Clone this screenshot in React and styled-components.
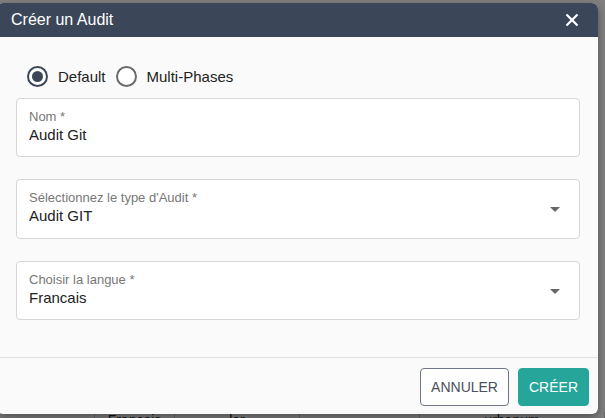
import React, { useState } from "react";
import styled, { createGlobalStyle } from "styled-components";

const Global = createGlobalStyle`
  html, body { margin: 0; padding: 0; }
  body {
    width: 605px; height: 418px; overflow: hidden;
    background: #ffffff;
    font-family: "Liberation Sans", Arial, sans-serif;
  }
`;

const Page = styled.div`
  position: relative;
  width: 605px;
  height: 418px;
  overflow: hidden;
  display: flex;
  flex-direction: column;
  justify-content: space-between;
  background: #ffffff;
`;

const TableRow = styled.div`
  display: grid;
  grid-template-columns: ${(p) => p.$cols};
  height: ${(p) => p.$h}px;
  flex: none;
  margin-top: ${(p) => p.$mt || 0}px;
  margin-bottom: ${(p) => p.$mb || 0}px;
  font-size: 14px;
  color: #222;
`;

const Cell = styled.div`
  border-right: 1px solid #cfcfcf;
  display: flex;
  align-items: center;
  justify-content: ${(p) => p.$justify || "center"};
  overflow: hidden;
  white-space: nowrap;
`;

const Caret = styled.span`
  font-size: 10px;
  color: #333;
`;

const Overlay = styled.div`
  position: absolute;
  inset: 0;
  background: rgba(0, 0, 0, 0.5);
`;

const Dialog = styled.div`
  position: absolute;
  left: -3px;
  top: 3px;
  width: 601px;
  height: 411px;
  background: #fafafa;
  border-radius: 6px;
  overflow: hidden;
  display: flex;
  flex-direction: column;
  box-shadow: 0 4px 10px rgba(0, 0, 0, 0.35);
`;

const Header = styled.div`
  height: 34px;
  flex: none;
  background: #3b4759;
  color: #ffffff;
  display: flex;
  align-items: center;
  justify-content: space-between;
  padding: 0 19px 0 14px;
`;

const Title = styled.h2`
  margin: 0;
  font-size: 16px;
  font-weight: 400;
`;

const CloseBtn = styled.button`
  border: 0;
  background: none;
  padding: 0;
  width: 14px;
  height: 14px;
  display: flex;
  cursor: pointer;
`;

const Body = styled.div`
  flex: 1;
  padding: 28px 18px 0 19px;
  display: flex;
  flex-direction: column;
`;

const RadioRow = styled.div`
  display: flex;
  align-items: center;
  gap: 10px;
  margin-left: 11px;
  height: 22px;
  margin-bottom: 11px;
`;

const RadioLabel = styled.label`
  display: flex;
  align-items: center;
  gap: 10px;
  font-size: 15px;
  color: #222;
  cursor: pointer;
`;

const RadioCircle = styled.span`
  width: 21px;
  height: 21px;
  box-sizing: border-box;
  border-radius: 50%;
  border: 2px solid ${(p) => (p.$on ? "#3b4759" : "#6a6a6a")};
  display: flex;
  align-items: center;
  justify-content: center;
  background: #fff;
  &::after {
    content: "";
    width: 11px;
    height: 11px;
    border-radius: 50%;
    background: #3b4759;
    display: ${(p) => (p.$on ? "block" : "none")};
  }
`;

const Fields = styled.div`
  display: flex;
  flex-direction: column;
  gap: 22px;
`;

const Field = styled.div`
  position: relative;
  height: ${(p) => p.$h}px;
  box-sizing: border-box;
  background: #ffffff;
  border: 1px solid #d6d6d6;
  border-radius: 4px;
  padding: 10px 12px 0 12px;
  display: flex;
  flex-direction: column;
  gap: 2px;
`;

const FieldLabel = styled.span`
  font-size: 13px;
  line-height: 15px;
  color: #777777;
`;

const FieldValue = styled.span`
  font-size: 15px;
  line-height: 18px;
  color: #222222;
`;

const Arrow = styled.span`
  position: absolute;
  right: 19px;
  top: 50%;
  margin-top: -2px;
  width: 0;
  height: 0;
  border-left: 5px solid transparent;
  border-right: 5px solid transparent;
  border-top: 5px solid #666;
`;

const Footer = styled.div`
  flex: none;
  border-top: 1px solid #e2e2e2;
  display: flex;
  justify-content: flex-end;
  gap: 9px;
  padding: 10px 9px 8px 0;
`;

const Button = styled.button`
  height: 38px;
  box-sizing: border-box;
  padding: 0 10px;
  font-family: "Liberation Sans", Arial, sans-serif;
  font-size: 14px;
  border-radius: 4px;
  cursor: pointer;
  border: 1px solid ${(p) => (p.$primary ? "#26a69a" : "#6f7787")};
  background: ${(p) => (p.$primary ? "#26a69a" : "#ffffff")};
  color: ${(p) => (p.$primary ? "#ffffff" : "#4a4f5a")};
`;

export default function App() {
  const [mode, setMode] = useState("default");
  return (
    <>
      <Global />
      <Page>
        <TableRow $cols="72px 33px 175px 12px 135px 18px 60px 35px 65px" $h={8} $mt={-8}>
          <Cell><Caret>▼</Caret></Cell>
          <Cell />
          <Cell>Egalement</Cell>
          <Cell />
          <Cell><Caret>▼</Caret></Cell>
          <Cell />
          <Cell>Egalement</Cell>
          <Cell />
          <Cell>Egalement</Cell>
        </TableRow>
        <TableRow $cols="95px 80px 125px 120px 185px" $h={16} $mb={-10}>
          <Cell $justify="flex-end">&nbsp;</Cell>
          <Cell>Francais</Cell>
          <Cell>lar</Cell>
          <Cell />
          <Cell>urbanum</Cell>
        </TableRow>
        <Overlay />
        <Dialog>
          <Header>
            <Title>Créer un Audit</Title>
            <CloseBtn aria-label="Fermer">
              <svg width="14" height="14" viewBox="0 0 14 14">
                <path d="M1.5 1.5 L12.5 12.5 M12.5 1.5 L1.5 12.5" stroke="#fff" strokeWidth="2.2" />
              </svg>
            </CloseBtn>
          </Header>
          <Body>
            <RadioRow>
              <RadioLabel onClick={() => setMode("default")}>
                <RadioCircle $on={mode === "default"} />
                Default
              </RadioLabel>
              <RadioLabel onClick={() => setMode("multi")}>
                <RadioCircle $on={mode === "multi"} />
                Multi-Phases
              </RadioLabel>
            </RadioRow>
            <Fields>
              <Field $h={59}>
                <FieldLabel>Nom *</FieldLabel>
                <FieldValue>Audit Git</FieldValue>
              </Field>
              <Field $h={60}>
                <FieldLabel>Sélectionnez le type d'Audit *</FieldLabel>
                <FieldValue>Audit GIT</FieldValue>
                <Arrow />
              </Field>
              <Field $h={59}>
                <FieldLabel>Choisir la langue *</FieldLabel>
                <FieldValue>Francais</FieldValue>
                <Arrow />
              </Field>
            </Fields>
          </Body>
          <Footer>
            <Button>ANNULER</Button>
            <Button $primary>CRÉER</Button>
          </Footer>
        </Dialog>
      </Page>
    </>
  );
}
